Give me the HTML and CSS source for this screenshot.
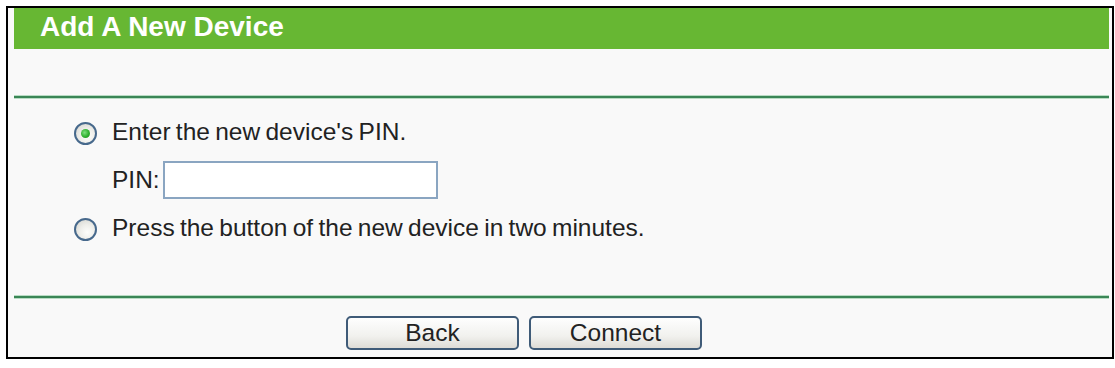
FILE: index.html
```html
<!DOCTYPE html>
<html lang="en">
<head>
    <meta charset="UTF-8">
    <title>Add A New Device</title>
    <link rel="stylesheet" href="styles.css">
</head>
<body>
    <div class="panel">
        <div class="panel-title">Add A New Device</div>

        <div class="rule rule-top"></div>

        <div class="options">
            <label class="option">
                <input type="radio" name="mode" class="radio" checked>
                <span>Enter the new device's PIN.</span>
            </label>
            <div class="pin-row">
                <span>PIN:</span>
                <input type="text" class="pin-input">
            </div>
            <label class="option">
                <input type="radio" name="mode" class="radio">
                <span>Press the button of the new device in two minutes.</span>
            </label>
        </div>

        <div class="rule rule-bottom"></div>

        <!-- Back / Connect -->
        <div class="actions">
            <button class="btn">Back</button>
            <button class="btn">Connect</button>
        </div>
    </div>
</body>
</html>
```

FILE: styles.css
```css
/* Reset default margin and padding */
body, html {
    margin: 0;
    padding: 0;
    background-color: #fff;
}

body {
    font-family: "Liberation Sans", Arial, sans-serif;
    color: #222;
}

/* Outer framed box */
.panel {
    box-sizing: border-box;
    width: 1108px;
    margin: 6px 0 0 6px;
    padding: 0 3px 7px 6px;
    border: 2px solid #000;
    background-color: #f9f9f9;
}

/* Green title bar */
.panel-title {
    height: 41px;
    box-sizing: border-box;
    padding: 0 0 4px 26px;
    line-height: 37px;
    font-size: 28px;
    font-weight: bold;
    color: #fff;
    background-color: #67b733;
}

/* Dark green separator lines */
.rule {
    height: 2px;
    background-color: #3a8656;
    box-shadow: 0 -1px 0 #b9dcc4, 0 1px 0 #b9dcc4;
}

.rule-top {
    margin-top: 47px;
}

.rule-bottom {
    margin-top: 54px;
}

/* Radio options */
.options {
    display: flex;
    flex-direction: column;
    gap: 15px;
    padding: 20px 0 0 60px;
    font-size: 24.5px;
    word-spacing: -1.5px;
}

.option {
    display: flex;
    align-items: center;
    height: 28px;
    line-height: 28px;
}

.radio {
    -webkit-appearance: none;
    appearance: none;
    box-sizing: border-box;
    width: 23px;
    height: 23px;
    margin: 2px 15px 0 0;
    border: 2px solid #47698c;
    border-radius: 50%;
    background: radial-gradient(circle at 60% 65%, #fdfdfb 0%, #eeeeea 45%, #d2d2cc 100%);
    position: relative;
}

.radio:checked::after {
    content: "";
    position: absolute;
    left: 5px;
    top: 5px;
    width: 9px;
    height: 9px;
    border-radius: 50%;
    background: radial-gradient(circle at 40% 40%, #7ee07e 0%, #2fb02f 55%, #1e8a1e 100%);
}

.pin-row {
    display: flex;
    align-items: center;
    height: 38px;
    margin-left: 38px;
}

.pin-input {
    box-sizing: border-box;
    width: 275px;
    height: 38px;
    margin-left: 3px;
    border: 2px solid #8aa5c1;
    background-color: #fff;
    font: inherit;
    outline: none;
}

/* Button row */
.actions {
    display: flex;
    gap: 10px;
    padding: 18px 0 0 332px;
}

.btn {
    box-sizing: border-box;
    width: 173px;
    height: 34px;
    padding: 0;
    border: 2px solid #3f5b78;
    border-radius: 5px;
    background: linear-gradient(#fefefe, #f1f1ee 60%, #dedcd6);
    font-family: "Liberation Sans", Arial, sans-serif;
    font-size: 24.5px;
    color: #222;
    line-height: 30px;
}
```
